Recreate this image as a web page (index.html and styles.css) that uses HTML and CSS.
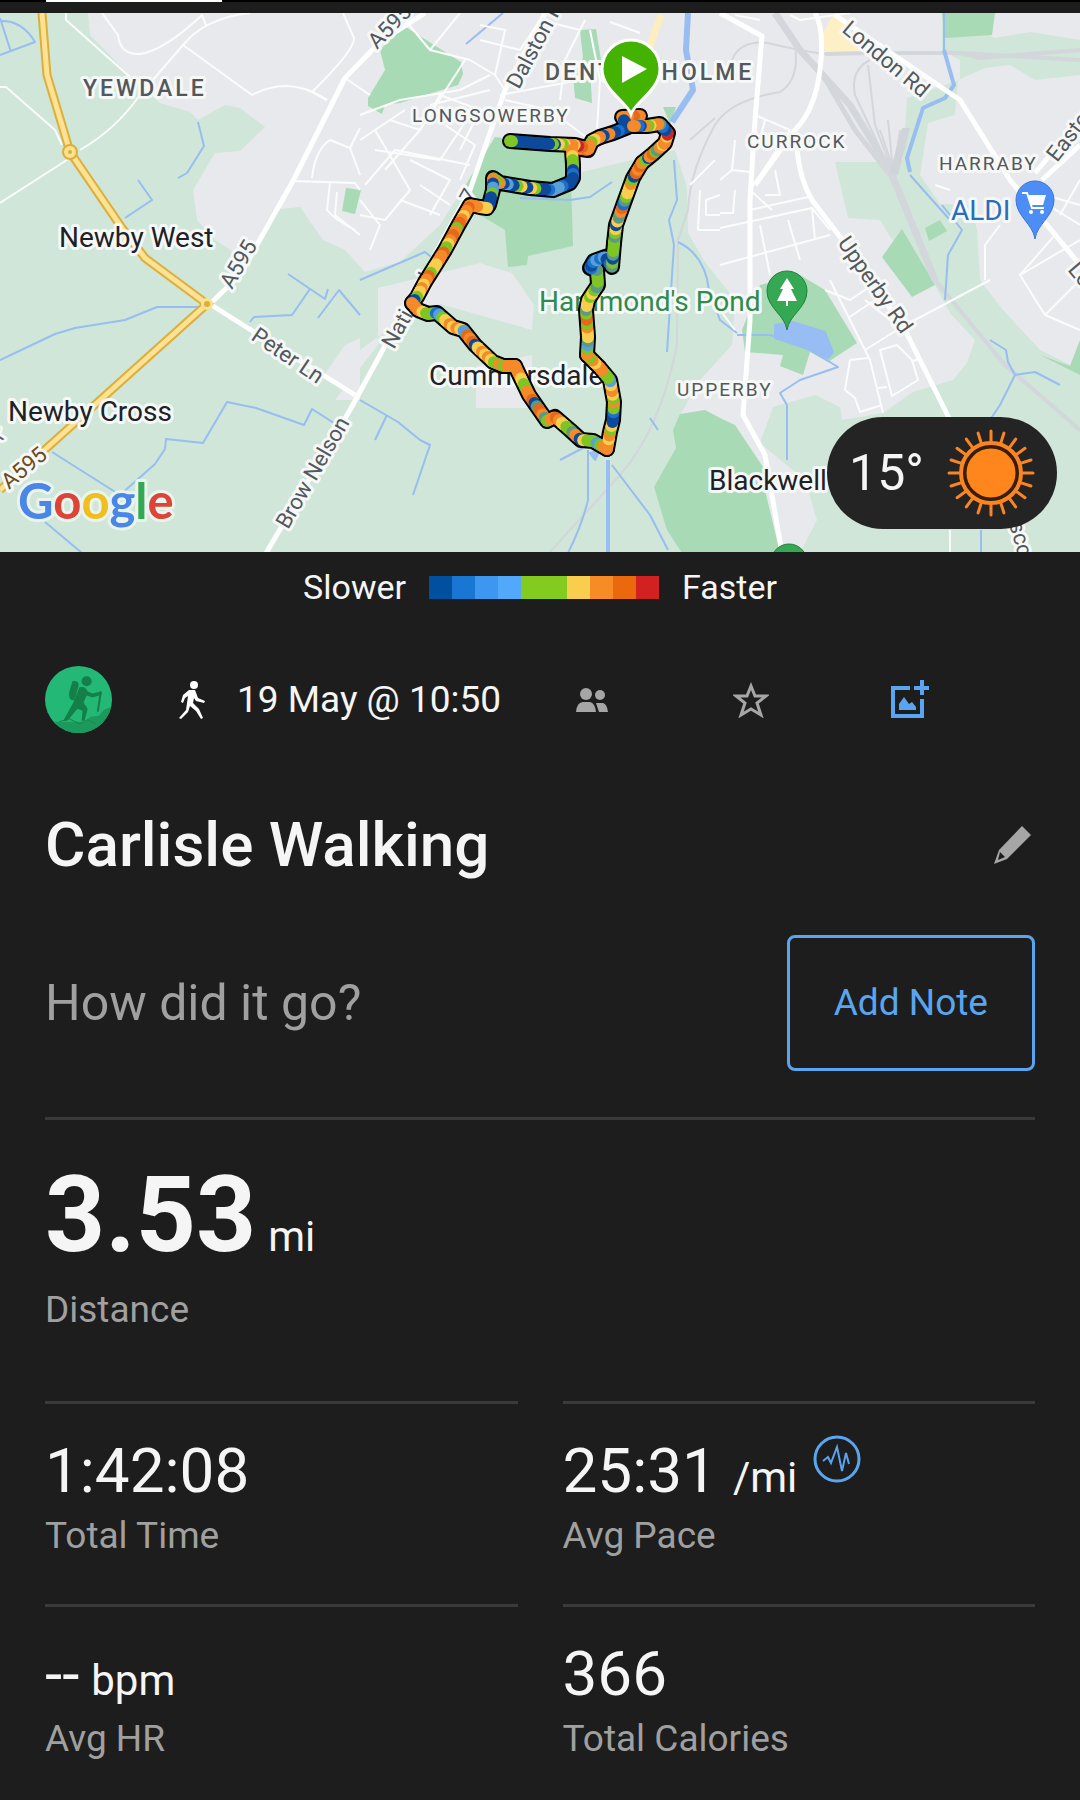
FILE: index.html
```
<!DOCTYPE html>
<html lang="en">

<head>
    <meta charset="UTF-8">
    <meta name="viewport" content="width=device-width, initial-scale=1.0">
    <title>Carlisle Walking</title>
    <link rel="stylesheet" href="styles.css">
</head>

<body>
    <div class="tabs">
        <div class="tab-active"></div>
    </div>

    <div class="map">
        <svg class="map-svg" viewBox="0 13 1080 539" role="img" aria-label="Route map">
            <rect y="13" width="1080" height="540" fill="#e8e9ec" />

            <!-- open land -->
            <g fill="#cfe6d8">
                <path d="M0 13H88L90 35L105 50L130 77L160 103L190 112L198 120L225 105L240 108L265 127L240 151L215 153L193 190L197 220L215 240L235 253L255 245L273 210L300 207L323 240L345 250L365 272L400 262L440 225L495 137H570V175L640 158L675 150L687 187L688 233L705 262L735 300L732 345L700 380L680 415L760 553H0Z" />
                <path d="M835 162L887 162L903 160L907 98L960 80L960 60L942 50L942 13L995 38L1030 32L1080 40V75L1035 80L1010 65L985 68L958 80L955 115L928 123L920 175L940 204L970 205L977 230L980 280L1003 310L1040 350L1080 370V553H800L817 520L805 480L760 443L773 407L815 395L840 407L842 420L883 413L913 392L953 380L967 363L975 340L950 313L935 285L890 237L880 220L848 218Z" />
            </g>
            <g fill="#e8e9ec">
                <path d="M378 288L480 263L512 273L534 305L532 330L440 304L412 312L360 350V400H335L378 345ZM476 366L532 355V408H476Z" />
                <path d="M324 375L345 345L360 338V395Z" />
            </g>

            <!-- parks -->
            <g fill="#a8dab5">
                <path d="M404 26L461 62L463 74L458 85L400 103L385 105L382 114L368 106L368 98L385 70L380 50Z" />
                <path d="M580 30L596 29L601 60L590 68L592 103L575 98L573 75L583 58Z" />
                <path d="M495 137L570 150L573 246L528 256L527 265L508 267L505 230L480 215L466 185Z" />
                <path d="M663 107L676 107L670 124Z" />
                <path d="M346 188L361 190L355 214L342 211Z" />
                <path d="M942 13H995L992 35L945 38Z" />
                <path d="M925 228L940 220L947 231L929 241Z" />
                <path d="M882 257L902 229L935 285L912 297Z" />
                <path d="M742 330L760 285L800 275L825 290L857 343L828 362L810 352L803 375L780 366L783 355L745 352Z" />
                <path d="M720 418L705 410L680 414L673 430L676 448L654 487L667 530L682 553H780L765 490V470L735 425Z" />
                <path d="M1040 355L1070 366L1080 340V375Z" />
            </g>
            <path fill="#fdf0c4" d="M823 33L834 13L870 53L825 54Z" />

            <!-- railways -->
            <g class="rail">
                <path stroke-width="7" d="M775 13L800 50L850 105L890 170L935 280" />
                <path stroke-width="5" d="M820 70L855 130L890 175" />
                <path stroke-width="4" d="M825 54L870 53L960 53L980 58L1080 50M960 53L1080 60" />
                <path d="M795 45Q800 80 780 92Q730 100 715 125Q690 170 688 210L678 240L677 345Q660 430 620 475L550 552M690 140L715 118M825 54Q795 50 768 43Q740 40 732 60" />
                <path d="M870 60Q850 70 855 95L890 170M868 65L875 125L892 170M888 120L893 170M900 130L893 175M906 128L895 180M880 130L892 165" />
                <path stroke-width="4" d="M935 280L1005 365L1080 430" />
            </g>
            <path fill="#d0d3d8" d="M902 128H910L898 175L890 172Z" />

            <!-- water -->
            <g class="water">
                <path d="M0 21Q22 20 35 42L0 55M0 18L11 52M198 122L204 146L187 173L178 178M138 180L152 200L125 218M466 44L503 13M288 274L325 299L328 289M0 360L55 334L75 328L125 320L157 307L200 307M250 322L254 317L292 315L310 289M318 318L339 290L360 315M52 452L120 495L155 464L165 449L166 439L203 443L227 402L256 408L304 425L312 409L337 425M45 522L82 553" />
                <path d="M360 400L398 422L420 440L430 445L413 495M387 415L375 440M360 280L425 252L435 260M520 198L570 200L590 197L612 182M674 160L677 200L669 220L674 245L667 352M678 242Q705 255 709 290L720 320L737 333M560 460L583 448M588 450V500Q582 525 568 553M612 465L650 515L668 550M650 418L658 430" />
                <path d="M737 335H770L800 343M810 350L838 367L800 380L780 393L787 405V460M944 13V50M942 205L962 230L948 255L945 300M990 340L1006 350L1008 362L1015 375L1035 372L1060 385M1015 375L1000 405L970 450M981 530V553M910 175L950 220" />
                <path stroke-width="6" d="M688 13L686 50L693 90L672 122" />
                <path stroke-width="4" d="M944 50L954 85L945 98L923 108L907 158L910 172M608 460V553" />
                <path fill="#98bdf5" d="M775 325L793 322L825 332L833 352L828 358L805 348L775 338ZM590 453L595 460L600 450Z" />
            </g>

            <!-- minor streets -->
            <g class="street">
                <path d="M66 13V20L130 77M102 13L118 35Q120 55 140 54Q165 50 202 15L206 25M183 45L252 95Q290 75 327 100M183 45Q205 18 250 13M183 45L140 95Q115 130 80 150M0 87H6L55 130L62 145M70 158L0 203" />
                <path d="M343 13L354 38Q355 50 312 92M345 78L370 95M312 92L327 100M293 181L355 183L360 190M312 178Q315 150 330 140L350 148L360 128M350 148L360 175M330 182L327 210Q335 220 355 230M337 192L335 215L360 235" />
                <path d="M405 20L430 50L470 60L495 75L505 30L480 25M430 50L460 13M465 60L420 130L390 120M405 110L360 140M430 105L490 90M375 150L440 160L470 115M500 95L580 80M375 130L410 190L385 220L360 215M410 160L450 180L430 215M445 125L475 145L460 180M420 185L450 205M360 200L380 225L370 250M505 100L550 110L590 140M540 20L580 30M590 30L600 80L597 130M610 22L640 33M560 100L565 60L585 20" />
                <path d="M360 115L400 100L460 90L490 75M385 170L420 130L440 95L480 110L460 150M400 200L440 215M365 185L395 150L470 165M480 40L520 50L540 20M495 75L505 90" />
                <path d="M690 185L715 160M700 190L698 230H720M720 195L706 200V215H720M755 115L790 130L750 190M765 120L760 140M735 140L732 170L750 172M732 170L720 180M735 190L733 213H720M750 210L808 197M720 228L812 208L830 230M750 190L772 210M775 170L780 195L765 195M760 225L770 275M788 220L800 260M720 265L830 235M812 208L815 240" />
                <path d="M865 300L900 328L990 280M830 280L870 360L883 413M865 350L905 325M848 318L875 300M850 360L845 390L855 398L860 412L882 405M850 360L868 358M880 350L897 345L912 360L918 380L892 396ZM912 362L920 358M878 388L887 387M825 290L850 300L880 280" />
                <path d="M1000 225L985 245V280M1040 200L1080 225M1045 195L1080 205M1055 235L1020 275L1045 315L1080 330M1045 315L1080 280M1020 275L1080 240M1080 180L1060 215M950 190L935 185M950 530V553M720 310L735 330M735 15L760 20M790 15L800 20L850 13" />
            </g>

            <!-- main roads -->
            <g class="road">
                <path d="M425 13L380 42L345 78L293 181L240 275L210 304L235 320L355 395M720 13L762 36L755 120L750 200V320L743 415L765 455L782 553M815 13Q825 30 820 70Q815 110 795 130L755 185M797 150Q800 180 812 200L850 250L905 330L950 420" />
                <path d="M835 15L960 100L1010 180L1080 265M1035 173L1080 120M1042 180L1080 145" />
                <path d="M545 13L505 90L470 190L410 300L350 410L265 555" />
                <path stroke-width="7" stroke="#fdeec0" d="M661 15L645 60" />
            </g>
            <path class="trunk-edge" d="M42 13L47 75L70 152L122 228L145 258L207 304L0 490" />
            <path class="trunk" d="M42 13L47 75L70 152L122 228L145 258L207 304L0 490" />
            <circle cx="70" cy="152" r="7" fill="#fbe28e" stroke="#dcaf3c" stroke-width="2" />
            <circle cx="70" cy="152" r="2" fill="#dcaf3c" />
            <circle cx="207" cy="304" r="6" fill="#fbe28e" />
            <circle cx="207" cy="304" r="3" fill="#dcaf3c" />

            <!-- place names -->
            <g class="label">
                <text class="area" x="83" y="96">YEWDALE</text>
                <text class="area area-small" x="412" y="122">LONGSOWERBY</text>
                <text class="area" x="545" y="80">DENTON HOLME</text>
                <text class="area area-small" x="747" y="148">CURROCK</text>
                <text class="area area-small" x="939" y="170">HARRABY</text>
                <text class="area area-small" x="677" y="396">UPPERBY</text>
                <text class="village" x="59" y="247">Newby West</text>
                <text class="village" x="8" y="421">Newby Cross</text>
                <text class="village" x="429" y="385">Cummersdale</text>
                <text class="village" x="709" y="490">Blackwell</text>
                <text class="village" x="951" y="220" fill="#2a6db8">ALDI</text>
                <text class="village" x="539" y="311" fill="#2f8a4c">Hammond's Pond</text>
                <text class="way" transform="translate(377 50) rotate(-46)">A595</text>
                <text class="way" transform="translate(519 90) rotate(-62)">Dalston Rd</text>
                <text class="way" transform="translate(841 31) rotate(40)">London Rd</text>
                <text class="way" transform="translate(1057 163) rotate(-52)">Eastern</text>
                <text class="way" transform="translate(837 243) rotate(55)">Upperby Rd</text>
                <text class="way" transform="translate(1067 270) rotate(50)">Lo</text>
                <text class="way" transform="translate(232 290) rotate(-60)">A595</text>
                <text class="way" transform="translate(250 339) rotate(34)">Peter Ln</text>
                <text class="way" transform="translate(288 530) rotate(-60)">Brow Nelson</text>
                <text class="way" transform="translate(394 350) rotate(-61)">National</text>
                <text class="way" transform="translate(472 205) rotate(-61)">7</text>
                <text class="way" transform="translate(9 490) rotate(-40)" fill="#6b4a22">A595</text>
                <text class="way" transform="translate(1009 524) rotate(74)">sco</text>
                <text class="way" transform="translate(-6 443) rotate(-20)">k</text>
            </g>

            <!-- map pins -->
            <g>
                <path d="M1035 239C1033 224 1016 216 1016 200A19 19 0 0 1 1054 200C1054 216 1037 224 1035 239Z" fill="#4d8df6" stroke="#3a74d8" />
                <path d="M1022 193H1027L1032 208H1044" fill="none" stroke="#fff" stroke-width="2" />
                <path d="M1028 195H1046L1043 205H1031Z" fill="#fff" />
                <circle cx="1031" cy="212" r="2" fill="#fff" />
                <circle cx="1042" cy="212" r="2" fill="#fff" />
                <path d="M787 330C785 315 767 308 767 291A20 20 0 0 1 807 291C807 308 789 315 787 330Z" fill="#34a853" stroke="#26803d" />
                <path d="M787 278L794 289H791L797 301H788V306H786V301H777L783 289H780Z" fill="#fff" />
                <circle cx="789" cy="562" r="18" fill="#34a853" stroke="#26803d" />
            </g>

            <g id="route"></g>

            <path d="M631 114C627 102 602 90 602 69A29 29 0 0 1 660 69C660 90 635 102 631 114Z" fill="#43b200" stroke="#fff" stroke-width="3" />
            <path d="M622 56L647 69L622 83Z" fill="#fff" />

            <text class="google" x="18" y="519"><tspan fill="#4a86e8">G</tspan><tspan fill="#db4437">o</tspan><tspan fill="#efbf1f">o</tspan><tspan fill="#4a86e8">g</tspan><tspan fill="#34a853">l</tspan><tspan fill="#db4437">e</tspan></text>
        </svg>

        <div class="weather">
            <span>15°</span>
            <svg class="sun" viewBox="-44 -44 88 88" aria-hidden="true">
                <g id="rays"></g>
                <circle r="30" fill="none" stroke="#fb8522" stroke-width="4" />
                <circle r="26" fill="#ff861c" stroke="#3d1d02" stroke-width="3" />
            </svg>
        </div>
    </div>

    <div class="legend">
        <span>Slower</span>
        <div class="scale">
            <i class="s1"></i><i class="s2"></i><i class="s3"></i><i class="s4"></i><i class="s5"></i><i class="s5"></i><i class="s6"></i><i class="s7"></i><i class="s8"></i><i class="s9"></i>
        </div>
        <span>Faster</span>
    </div>

    <main class="content">
        <div class="meta">
            <svg class="avatar" viewBox="0 0 66 66" aria-hidden="true">
                <clipPath id="round"><circle cx="33" cy="33" r="33" /></clipPath>
                <g clip-path="url(#round)">
                    <rect width="66" height="66" fill="#24b876" />
                    <path d="M0 55H38L45 50L53 49L58 43L66 40V66H0Z" fill="#1c9a5b" />
                    <path d="M14 55L24 52L34 57L42 53L50 57" fill="none" stroke="#188a50" />
                    <g fill="#147f49">
                        <circle cx="41" cy="15" r="5" />
                        <path d="M27 15Q34 14 33 20L29 34Q22 34 24 25Z" />
                        <path d="M34 21Q39 19 42 25L47 27L55 25L56 28L47 31L41 29L38 36L42 42L39 54H36L37 44L32 42L22 54H18L28 36Z" />
                    </g>
                    <path d="M55 25L52 45" stroke="#147f49" stroke-width="2" />
                </g>
            </svg>
            <svg class="walker" viewBox="0 0 26 40" aria-hidden="true">
                <g fill="#fff">
                    <circle cx="15" cy="5" r="4" />
                    <path d="M10 10H16L19 18L26 21L25 23L17 21L15 18L14 23L20 29L24 38L22 39L17 31L11 26L9 32L2 39L0 38L7 30L9 16L6 18L4 23L2 22L4 15Z" />
                </g>
            </svg>
            <span class="date">19 May @ 10:50</span>
            <div class="actions">
                <button aria-label="Friends">
                    <svg width="32" height="26" viewBox="0 0 32 26" fill="#a6a6a6">
                        <circle cx="10" cy="7" r="6" />
                        <circle cx="24" cy="8" r="5" />
                        <path d="M0 25Q1 15 7 15H14Q19 16 20 25ZM20 16H27Q31 17 32 25H23Z" />
                    </svg>
                </button>
                <button aria-label="Favourite">
                    <svg width="36" height="36" viewBox="0 0 36 36" fill="none" stroke="#a6a6a6" stroke-width="3">
                        <path d="M18 4L22 14L33 14L24 21L28 33L18 27L8 33L12 21L3 14L14 14Z" />
                    </svg>
                </button>
                <button aria-label="Add photo">
                    <svg width="38" height="40" viewBox="0 0 38 40" fill="none" stroke="#5aa5f0" stroke-width="4">
                        <path d="M19 8H2V36H31V19M31 0V15M23 8H38" />
                        <path d="M8 30V24L13 17L18 24L21 22L25 27V30Z" fill="#5aa5f0" stroke="none" />
                    </svg>
                </button>
            </div>
        </div>

        <div class="title-row">
            <h1>Carlisle Walking</h1>
            <button aria-label="Edit title">
                <svg width="38" height="38" viewBox="0 0 38 38">
                    <path d="M28 0L37 9L13 33L0 38L5 24Z" fill="#a6a6a6" />
                    <path d="M6 26L11 31L4 34Z" fill="#1d1d1d" />
                </svg>
            </button>
        </div>

        <div class="note-row">
            <span class="prompt">How did it go?</span>
            <button class="add-note">Add Note</button>
        </div>

        <section class="distance">
            <div class="big">3.53<small>mi</small></div>
            <div class="name">Distance</div>
        </section>

        <section class="stats">
            <div class="stat">
                <div class="value">1:42:08</div>
                <div class="name">Total Time</div>
            </div>
            <div class="stat">
                <div class="value">25:31<small class="per">/mi</small>
                    <button aria-label="Pace chart">
                        <svg width="48" height="48" viewBox="0 0 48 48" fill="none" stroke="#5aa5f0" stroke-width="3">
                            <circle cx="24" cy="24" r="22" />
                            <path stroke-width="2" d="M10 26L15 22L18 28L24 12L29 36L33 18L36 29" />
                        </svg>
                    </button>
                </div>
                <div class="name">Avg Pace</div>
            </div>
            <div class="stat">
                <div class="value">--<small>bpm</small></div>
                <div class="name">Avg HR</div>
            </div>
            <div class="stat">
                <div class="value">366</div>
                <div class="name">Total Calories</div>
            </div>
        </section>
    </main>

    <script src="route.js"></script>
</body>

</html>
```

FILE: styles.css
```
* {
    box-sizing: border-box;
}

body {
    margin: 0;
    background-color: #1d1d1d;
    color: #f5f5f5;
    font-family: Roboto, "Liberation Sans", sans-serif;
    font-size: 37px;
    line-height: 44px;
}

button {
    display: flex;
    padding: 0;
    border: none;
    background: none;
    font: inherit;
    cursor: pointer;
}

.tabs {
    height: 13px;
    padding-left: 46px;
    border-top: 2px solid #000;
}

.tab-active {
    width: 176px;
    height: 2px;
    margin-top: -2px;
    background-color: #fff;
}

/* map */
.map {
    position: relative;
}

.map-svg {
    display: block;
    width: 100%;
}

.map-svg .street,
.map-svg .road,
.map-svg .rail,
.map-svg .water {
    fill: none;
    stroke-linejoin: round;
}

.map-svg .street {
    stroke: #fbfcfc;
    stroke-width: 2px;
}

.map-svg .road {
    stroke: #fff;
    stroke-width: 5px;
}

.map-svg .rail {
    stroke: #d3d6da;
    stroke-width: 2px;
}

.map-svg .water {
    stroke: #98bdf0;
    stroke-width: 2px;
}

.map-svg .trunk,
.map-svg .trunk-edge {
    fill: none;
    stroke: #fde293;
    stroke-width: 5px;
}

.map-svg .trunk-edge {
    stroke: #dcaf3c;
    stroke-width: 9px;
}

.map-svg .label {
    paint-order: stroke;
    stroke: #f6f8f8;
    stroke-width: 6px;
    stroke-linejoin: round;
    fill: #54585c;
}

.map-svg .area {
    font-size: 23px;
    font-weight: 500;
    letter-spacing: 3px;
}

.map-svg .area-small {
    font-size: 19px;
    font-weight: 400;
    letter-spacing: 2px;
}

.map-svg .village {
    font-size: 28px;
}

.map-svg .village:not([fill]) {
    fill: #202124;
}

.map-svg .way {
    font-size: 22px;
}

.map-svg .google {
    font-family: Lato, sans-serif;
    font-size: 49px;
    font-weight: 700;
    paint-order: stroke;
    stroke: #eaf4ee;
    stroke-width: 6px;
    stroke-linejoin: round;
}

.weather {
    position: absolute;
    right: 23px;
    bottom: 23px;
    display: flex;
    align-items: center;
    gap: 23px;
    height: 112px;
    padding: 0 22px;
    border-radius: 56px;
    background-color: #242424;
    font-size: 50px;
}

.sun {
    width: 88px;
    height: 88px;
}

/* pace legend */
.legend {
    display: flex;
    justify-content: center;
    align-items: center;
    gap: 23px;
    padding: 13px 0;
    font-size: 34px;
}

.scale {
    display: flex;
}

.scale i {
    width: 23px;
    height: 23px;
}

.s1 { background-color: #0050a0; }
.s2 { background-color: #1976d2; }
.s3 { background-color: #3d97f0; }
.s4 { background-color: #52a8fa; }
.s5 { background-color: #84cb1f; }
.s6 { background-color: #f9cd4d; }
.s7 { background-color: #f78b25; }
.s8 { background-color: #e9690c; }
.s9 { background-color: #d12121; }

/* activity */
.content {
    padding: 44px 45px;
}

.meta {
    display: flex;
    align-items: center;
}

.avatar {
    width: 67px;
    height: 67px;
    margin-right: 67px;
}

.walker {
    width: 26px;
    height: 40px;
    margin-right: 32px;
}

.actions {
    flex: 1;
    display: grid;
    grid-template-columns: repeat(3, 1fr);
    justify-items: center;
    align-items: center;
    margin-left: 12px;
    margin-right: 46px;
}

.title-row {
    display: flex;
    justify-content: space-between;
    align-items: center;
    padding: 76px 3px 0 0;
}

h1 {
    margin: 0;
    font-size: 62px;
    font-weight: 500;
    line-height: 72px;
}

.note-row {
    display: flex;
    justify-content: space-between;
    align-items: center;
    padding: 54px 0 46px;
    border-bottom: 3px solid #3a3a3a;
}

.prompt {
    color: #a0a0a0;
    font-size: 50px;
}

.add-note {
    justify-content: center;
    padding: 43px 44px;
    border: 3px solid #5aa5f0;
    border-radius: 8px;
    color: #5aa5f0;
}

.distance {
    padding: 45px 0 69px;
}

.big {
    display: flex;
    align-items: baseline;
    gap: 12px;
    font-size: 105px;
    font-weight: 700;
    line-height: 102px;
}

small {
    font-size: 42px;
    font-weight: 400;
}

.name {
    color: #a0a0a0;
}

.stats {
    display: grid;
    grid-template-columns: 1fr 1fr;
    column-gap: 45px;
}

.stat {
    padding: 31px 0 46px;
    border-top: 3px solid #3a3a3a;
}

.value {
    display: flex;
    align-items: baseline;
    gap: 12px;
    height: 79px;
    font-size: 62px;
    line-height: 72px;
}

.value .per {
    padding: 0 4px;
}

.value button {
    align-self: flex-start;
}
```

FILE: route.js
```
const NS = 'http://www.w3.org/2000/svg'

const colors = {
    n: '#0d4a9c',
    b: '#1b70cc',
    l: '#58a0d8',
    t: '#5c9a84',
    g: '#7fc524',
    y: '#f6cf50',
    o: '#f58a2a',
    d: '#e4691a',
    r: '#c9282b'
}

// each leg of the walk with its pace, from start to end
const legs = [
    ['M640 116L622 117L628 127L613 133L600 137', 'odoonnnbnon'],
    ['M600 137L592 141L588 150L575 148', 'oygoodo'],
    ['M586 148L575 145L550 144L510 141', 'odryooygyngnnnnnnnnnnng'],
    ['M572 150L573 165V178L570 183L553 190L530 188L500 183L493 178L493 190L489 205', 'oyggnbnnnbllbnngynygnlnogonlgnn'],
    ['M487 208L480 207L470 205L459 224L445 250L425 282L417 297L412 303', 'yyoodoyodgodoygdooyygdoyoygn'],
    ['M412 303L418 310L428 314L437 313L453 327L463 330L475 345L493 362L503 366L515 366', 'oooyggblgyoyoyldodnyoyoygogoo'],
    ['M515 366L529 395L547 421L555 417L570 430L581 440L593 441L607 449', 'oooyggoodntdotgodoyggtonygglgo'],
    ['M607 449L610 432L613 420L614 402L610 380L600 368L587 355', 'ooyogynnbgogyoylggooyog'],
    ['M587 355L588 337L586 310L588 300L598 285L597 270', 'ogltyyogdgtyygygtggg'],
    ['M597 270L590 268L594 261L605 257L612 267L614 243', 'tbnblblnbtgntgg'],
    ['M614 243L616 225L625 200L633 178L642 163', 'gtgynytodbtgyyogndod'],
    ['M642 163L653 154L665 143L668 133L660 124L647 126L633 126', 'ognodgtoyooyrrnbtooygonbo']
]

const route = document.getElementById('route')

function add(parent, tag, attrs) {
    const el = document.createElementNS(NS, tag)
    for (const key in attrs) el.setAttribute(key, attrs[key])
    parent.appendChild(el)
    return el
}

// black casing below every leg
const paths = legs.map(([d]) => add(route, 'path', {
    d,
    fill: 'none',
    stroke: '#000',
    'stroke-width': 16,
    'stroke-linecap': 'round',
    'stroke-linejoin': 'round'
}))

legs.forEach(([, pace], i) => {
    const length = paths[i].getTotalLength()
    const steps = Math.ceil(length / 2)
    for (let s = 0; s <= steps; s++) {
        const p = paths[i].getPointAtLength(length * s / steps)
        const key = pace[Math.min(pace.length - 1, Math.floor(s / steps * pace.length))]
        add(route, 'circle', { cx: p.x, cy: p.y, r: 6, fill: colors[key] })
    }
})

const rays = document.getElementById('rays')
for (let a = 0; a < 360; a += 18) {
    add(rays, 'line', {
        x1: 0, y1: -31, x2: 0, y2: -42,
        stroke: '#fb8522',
        'stroke-width': 3,
        'stroke-linecap': 'round',
        transform: `rotate(${a})`
    })
}
```
